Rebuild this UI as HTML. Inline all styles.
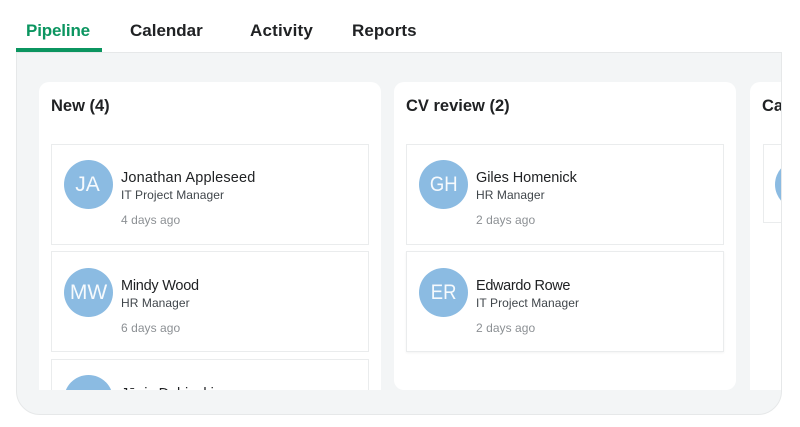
<!DOCTYPE html>
<html><head><meta charset="utf-8">
<style>
html,body{margin:0;padding:0;background:#fff}
body{width:800px;height:427px;position:relative;overflow:hidden;font-family:"Liberation Sans",sans-serif}
.a{position:absolute;white-space:nowrap}
.tab{top:21px;font-size:17px;font-weight:700;color:#202224;line-height:20px}
#frame{position:absolute;left:16px;top:52px;width:764px;height:361px;background:#f3f5f6;border:1px solid #e6e8e9;border-radius:0 0 24px 24px;overflow:hidden}
.col{position:absolute;top:29px;width:342px;height:308px;background:#fff;border-radius:10px 10px 0 0;overflow:hidden}
.colb{border-radius:10px}
.h{position:absolute;left:12px;top:14px;font-size:16.5px;font-weight:700;color:#202224;line-height:20px;white-space:nowrap}
.card{position:absolute;left:12px;width:316px;height:99px;background:#fff;border:1px solid #eaeced}
.av{position:absolute;left:12px;top:15px;width:49px;height:49px;border-radius:50%;background:#8bbbe2;color:rgba(255,255,255,.92);font-size:21px;line-height:49px;text-align:center}
.av span{display:inline-block}
.n{position:absolute;left:69px;top:24px;font-size:14.5px;line-height:18px;color:#202224;white-space:nowrap}
.r{position:absolute;left:69px;top:42px;font-size:12px;line-height:16px;color:#40464b;white-space:nowrap;letter-spacing:.07px}
.t{position:absolute;left:69px;top:67px;font-size:12px;line-height:16px;color:#8c9094;white-space:nowrap;letter-spacing:.05px}
.low .av{top:16px}
.low .n{top:25px}
.low .r{top:43px}
.low .t{top:68px}
</style></head><body>
<div class="a tab" style="left:26px;color:#0b9560;letter-spacing:-.15px">Pipeline</div>
<div class="a tab" style="left:130px;letter-spacing:0">Calendar</div>
<div class="a tab" style="left:250px;letter-spacing:.2px">Activity</div>
<div class="a tab" style="left:352px;letter-spacing:.05px">Reports</div>
<div id="frame">
  <div class="col" style="left:22px">
    <div class="h">New (4)</div>
    <div class="card" style="top:62px"><div class="av"><span style="transform:translateX(-1px)">JA</span></div><div class="n" style="letter-spacing:.17px">Jonathan Appleseed</div><div class="r">IT Project Manager</div><div class="t">4 days ago</div></div>
    <div class="card low" style="top:169px"><div class="av"><span>MW</span></div><div class="n" style="letter-spacing:-.25px">Mindy Wood</div><div class="r">HR Manager</div><div class="t">6 days ago</div></div>
    <div class="card low" style="top:277px;height:40px"><div class="av" style="top:15px"></div><div class="n" style="letter-spacing:-.05px">Jānis Dubinskis</div></div>
  </div>
  <div class="col colb" style="left:377px">
    <div class="h">CV review (2)</div>
    <div class="card" style="top:62px"><div class="av"><span style="transform:scaleX(.88)">GH</span></div><div class="n" style="letter-spacing:-.05px">Giles Homenick</div><div class="r">HR Manager</div><div class="t">2 days ago</div></div>
    <div class="card low" style="top:169px;box-shadow:0 1px 2px rgba(0,0,0,.05)"><div class="av"><span style="transform:scaleX(.88)">ER</span></div><div class="n" style="letter-spacing:-.35px">Edwardo Rowe</div><div class="r">IT Project Manager</div><div class="t">2 days ago</div></div>
  </div>
  <div class="col" style="left:733px">
    <div class="h">Ca</div>
    <div class="card" style="top:62px;height:77px;left:13px"><div class="av" style="left:11px"></div></div>
  </div>
</div>
<div class="a" style="left:16px;top:48px;width:86px;height:4px;background:#0b9560"></div>
</body></html>
